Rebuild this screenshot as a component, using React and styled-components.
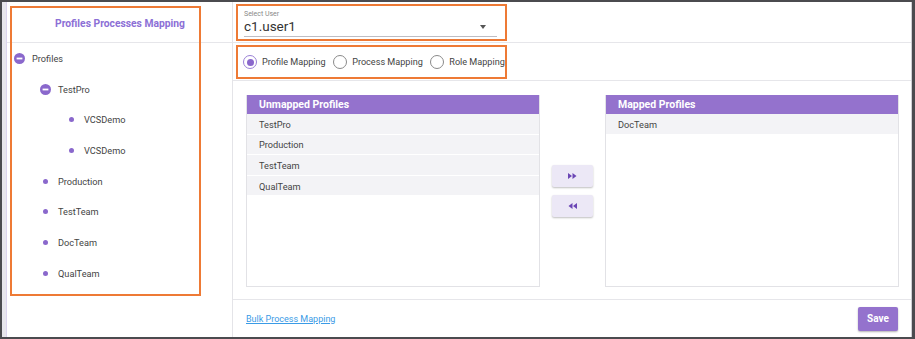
import React from 'react'
import styled, { createGlobalStyle } from 'styled-components'

const GlobalStyle = createGlobalStyle`
  html, body { margin: 0; padding: 0; background: #fff; }
  body { font-family: Roboto, "Noto Sans", Arial, sans-serif; }
  * { box-sizing: border-box; }
`

const PURPLE = '#9472cd'
const ORANGE = '#ee7a35'

const tree = [
  { label: 'Profiles', level: 0, kind: 'minus' },
  { label: 'TestPro', level: 1, kind: 'minus' },
  { label: 'VCSDemo', level: 2, kind: 'dot' },
  { label: 'VCSDemo', level: 2, kind: 'dot' },
  { label: 'Production', level: 1, kind: 'dot' },
  { label: 'TestTeam', level: 1, kind: 'dot' },
  { label: 'DocTeam', level: 1, kind: 'dot' },
  { label: 'QualTeam', level: 1, kind: 'dot' },
]

const unmapped = ['TestPro', 'Production', 'TestTeam', 'QualTeam']
const mapped = ['DocTeam']

export default function App() {
  return (
    <>
      <GlobalStyle />
      <Frame>
        <Shell>
          <LeftPanel>
            <Annotation />
            <Title>Profiles Processes Mapping</Title>
            <Tree>
              {tree.map((n, i) => (
                <TreeItem key={i} $level={n.level}>
                  <Bullet>{n.kind === 'minus' ? <MinusIcon /> : <Dot />}</Bullet>
                  {n.label}
                </TreeItem>
              ))}
            </Tree>
          </LeftPanel>

          <RightPanel>
            <TopRow>
              <SelectBox>
                <SelectLabel>Select User</SelectLabel>
                <SelectValue>
                  c1.user1
                  <Caret />
                </SelectValue>
              </SelectBox>
            </TopRow>

            <RadioRow>
              <RadioGroup>
                <Radio><RadioCircle $checked />Profile Mapping</Radio>
                <Radio><RadioCircle />Process Mapping</Radio>
                <Radio><RadioCircle />Role Mapping</Radio>
              </RadioGroup>
            </RadioRow>

            <Lists>
              <ListBox>
                <ListHeader>Unmapped Profiles</ListHeader>
                {unmapped.map((p) => <ListRow key={p}>{p}</ListRow>)}
              </ListBox>
              <Mover>
                <MoveButton>
                  <svg width="9" height="6" viewBox="0 0 9 6"><path d="M0 0L4 3L0 6Z M4.5 0L8.5 3L4.5 6Z" fill="#6b46b5" /></svg>
                </MoveButton>
                <MoveButton>
                  <svg width="9" height="6" viewBox="0 0 9 6"><path d="M4.5 0L0.5 3L4.5 6Z M9 0L5 3L9 6Z" fill="#6b46b5" /></svg>
                </MoveButton>
              </Mover>
              <ListBox>
                <ListHeader>Mapped Profiles</ListHeader>
                {mapped.map((p) => <ListRow key={p}>{p}</ListRow>)}
              </ListBox>
            </Lists>

            <Footer>
              <BulkLink href="#">Bulk Process Mapping</BulkLink>
              <SaveButton>Save</SaveButton>
            </Footer>
          </RightPanel>
        </Shell>
      </Frame>
    </>
  )
}

function MinusIcon() {
  return (
    <svg width="11" height="11" viewBox="0 0 11 11">
      <circle cx="5.5" cy="5.5" r="5.5" fill="#8a68cc" />
      <rect x="2.6" y="4.6" width="5.8" height="1.8" fill="#fff" />
    </svg>
  )
}

const Frame = styled.div`
  width: 915px;
  height: 339px;
  border: 2px solid #4b4b4f;
  border-right-width: 3px;
  background: #e7e6ec;
  padding-left: 4px;
`

const Shell = styled.div`
  height: 100%;
  display: grid;
  grid-template-columns: 226px 1fr;
  border-left: 1px solid #dcd4ee;
  border-right: 1px solid #cfcfd4;
  background: #fff;
`

const LeftPanel = styled.div`
  position: relative;
  border-right: 1px solid #e4e4e8;
`

const Annotation = styled.div`
  position: absolute;
  left: 3px;
  top: 4px;
  width: 191px;
  height: 290px;
  border: 2px solid ${ORANGE};
  pointer-events: none;
`

const Title = styled.div`
  height: 41px;
  border-bottom: 1px solid #e6e6ea;
  display: flex;
  align-items: center;
  justify-content: center;
  padding: 2px 0 0 1px;
  color: #8c6fd6;
  font-size: 10.3px;
  font-weight: 700;
`

const Tree = styled.div`
  display: flex;
  flex-direction: column;
`

const TreeItem = styled.div`
  height: 30.7px;
  display: flex;
  align-items: center;
  padding-left: ${(p) => 5 + p.$level * 26}px;
  font-size: 9.2px;
  color: #444;
`

const Bullet = styled.span`
  width: 14px;
  margin-right: 6px;
  display: flex;
  justify-content: center;
  align-items: center;
`

const Dot = styled.span`
  width: 5px;
  height: 5px;
  border-radius: 50%;
  background: #8a68cc;
`

const RightPanel = styled.div`
  display: grid;
  grid-template-rows: 41px 38px 1fr 38px;
`

const TopRow = styled.div`
  border-bottom: 1px solid #e6e6ea;
  padding: 2px 0 0 3px;
`

const SelectBox = styled.div`
  width: 271px;
  height: 37px;
  border: 2px solid ${ORANGE};
  padding: 4px 8px 0 6px;
  position: relative;
`

const SelectLabel = styled.div`
  font-size: 7px;
  color: #888;
  line-height: 8px;
`

const SelectValue = styled.div`
  position: relative;
  font-size: 13.5px;
  color: #333;
  line-height: 16px;
  padding-bottom: 2px;
  border-bottom: 1px solid #bdbdc4;
`

const Caret = styled.span`
  position: absolute;
  right: 11px;
  top: 7px;
  border-left: 3.5px solid transparent;
  border-right: 3.5px solid transparent;
  border-top: 4px solid #555;
`

const RadioRow = styled.div`
  border-bottom: 1px solid #e6e6ea;
  padding: 2px 0 0 3px;
`

const RadioGroup = styled.div`
  width: 271px;
  height: 34px;
  border: 2px solid ${ORANGE};
  display: flex;
  align-items: center;
  gap: 7.5px;
  padding-left: 5px;
`

const Radio = styled.label`
  display: flex;
  align-items: center;
  gap: 5px;
  font-size: 9.1px;
  color: #444;
  white-space: nowrap;
`

const RadioCircle = styled.span`
  width: 14px;
  height: 14px;
  border-radius: 50%;
  border: 1.5px solid ${(p) => (p.$checked ? '#9a80d6' : '#8a8a8a')};
  display: flex;
  align-items: center;
  justify-content: center;
  &::after {
    content: '';
    width: 7px;
    height: 7px;
    border-radius: 50%;
    background: ${(p) => (p.$checked ? '#8a68cc' : 'transparent')};
  }
`

const Lists = styled.div`
  display: grid;
  grid-template-columns: 294px 41px 294px;
  column-gap: 12px;
  padding: 14px 0 12px 13px;
`

const ListBox = styled.div`
  border: 1px solid #e2e2e6;
  border-top: none;
  background: #fff;
`

const ListHeader = styled.div`
  height: 19px;
  background: ${PURPLE};
  color: #fff;
  font-size: 10.5px;
  font-weight: 700;
  display: flex;
  align-items: center;
  padding-left: 12px;
`

const ListRow = styled.div`
  height: 20.6px;
  display: flex;
  align-items: center;
  padding: 1px 0 0 12px;
  font-size: 9.2px;
  color: #444;
  background: #f3f3f6;
  border-bottom: 1px solid #fff;
`

const Mover = styled.div`
  display: flex;
  flex-direction: column;
  justify-content: center;
  gap: 8px;
`

const MoveButton = styled.button`
  height: 22px;
  border: none;
  border-radius: 2px;
  background: #ece8f6;
  box-shadow: 0 1px 2px rgba(0, 0, 0, 0.25);
  display: flex;
  align-items: center;
  justify-content: center;
  padding: 0;
`

const Footer = styled.div`
  border-top: 1px solid #e6e6ea;
  display: flex;
  align-items: center;
  justify-content: space-between;
  padding: 0 13px 0 13px;
`

const BulkLink = styled.a`
  font-size: 9px;
  color: #3a9be6;
  text-decoration: underline;
`

const SaveButton = styled.button`
  width: 40px;
  height: 24px;
  border: none;
  border-radius: 2px;
  background: ${PURPLE};
  color: #fff;
  font-family: inherit;
  font-size: 10px;
  font-weight: 700;
  box-shadow: 0 1px 2px rgba(0, 0, 0, 0.3);
`
